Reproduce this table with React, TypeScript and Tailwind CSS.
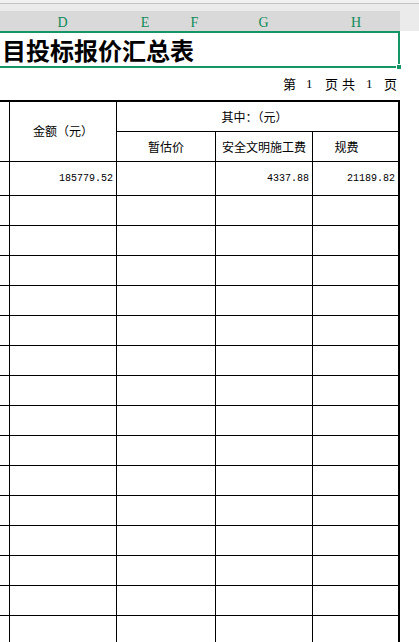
import type { ReactNode } from "react";

const CJK = "font-['Noto_Sans_CJK_SC','Noto_Sans',sans-serif]";
const MONO = "font-['Liberation_Mono',monospace]";

const COLS = [
  { key: "D", w: "w-[107px]" },
  { key: "E", w: "w-[58px]" },
  { key: "F", w: "w-[41px]" },
  { key: "G", w: "w-[97px]" },
  { key: "H", w: "w-[88px]" },
];

const EMPTY_ROWS = 15;

function Cell({ w, children, className = "" }: { w: string; children?: ReactNode; className?: string }) {
  return (
    <div className={`${w} shrink-0 border-r border-black h-full flex items-center ${className}`}>
      {children}
    </div>
  );
}

function Row({ h, cells }: { h: string; cells: (string | undefined)[] }) {
  const widths = ["w-[107px]", "w-[99px]", "w-[97px]"];
  return (
    <div className={`flex ${h} border-b border-black`}>
      <div className="w-[10px] shrink-0 border-r border-black" />
      {widths.map((w, i) => (
        <Cell key={i} w={w} className={`justify-end pr-[3px] ${MONO} text-[10px] text-black`}>
          {cells[i]}
        </Cell>
      ))}
      <div className={`w-[87px] shrink-0 border-r-2 border-black flex items-center justify-end pr-[3px] ${MONO} text-[10px]`}>
        {cells[3]}
      </div>
    </div>
  );
}

export default function App() {
  return (
    <div className="w-[419px] h-[642px] overflow-hidden bg-white relative">
      {/* top chrome */}
      <div className="h-[3px] bg-[#f1f1f1]" />
      <div className="h-[1px] bg-[#c3c3c3]" />
      <div className="h-[7px] bg-[#ebebeb]" />

      {/* column letters */}
      <div className="flex h-[20px]">
        <div className="flex w-[400px] bg-[#d9d9d9]">
          <div className="w-[9px]" />
          {COLS.map((c) => (
            <div
              key={c.key}
              className={`${c.w} flex items-center justify-center font-['Liberation_Serif',serif] text-[14px] text-[#0f8a57] pt-[2px]`}
            >
              {c.key}
            </div>
          ))}
        </div>
        <div className="flex-1 bg-[#ebebeb]" />
      </div>

      {/* title, selected cell */}
      <div className="relative w-[400px] h-[37px] border-2 border-l-0 border-[#139565] flex items-center">
        <span className={`pl-[2px] ${CJK} font-bold text-[24px] leading-none text-black`}>目投标报价汇总表</span>
        <div className="absolute -right-[4px] -bottom-[4px] w-[6px] h-[6px] bg-[#139565] border border-white" />
      </div>

      {/* page count */}
      <div className={`w-[400px] h-[32px] flex justify-end items-center pr-[3px] pb-[2px] ${CJK} text-[13px] leading-none text-black`}>
        <span>第</span>
        <span className="ml-[10px] w-[7px] font-['Liberation_Serif',serif]">1</span>
        <span className="ml-[12px]">页</span>
        <span className="ml-[4px]">共</span>
        <span className="ml-[11px] w-[7px] font-['Liberation_Serif',serif]">1</span>
        <span className="ml-[11px]">页</span>
      </div>

      {/* table */}
      <div className={`w-[400px] border-t-2 border-black ${CJK} text-[12px] text-black`}>
        <div className="flex h-[60px] border-b border-black">
          <div className="w-[10px] shrink-0 border-r border-black" />
          <div className="w-[107px] shrink-0 border-r border-black flex items-center justify-center pb-[1px]">
            金额（元）
          </div>
          <div className="w-[283px] shrink-0 flex flex-col">
            <div className="h-[30px] border-b border-r-2 border-black flex items-center justify-center pr-[6px]">
              其中：（元）
            </div>
            <div className="flex flex-1">
              <div className="w-[99px] shrink-0 border-r border-black flex items-center justify-center">暂估价</div>
              <div className="w-[97px] shrink-0 border-r border-black flex items-center justify-center">安全文明施工费</div>
              <div className="w-[87px] shrink-0 border-r-2 border-black flex items-center justify-center pr-[18px]">规费</div>
            </div>
          </div>
        </div>
        <Row h="h-[34px]" cells={["185779.52", undefined, "4337.88", "21189.82"]} />
        {Array.from({ length: EMPTY_ROWS }).map((_, i) => (
          <Row key={i} h="h-[30px]" cells={[]} />
        ))}
      </div>
    </div>
  );
}
